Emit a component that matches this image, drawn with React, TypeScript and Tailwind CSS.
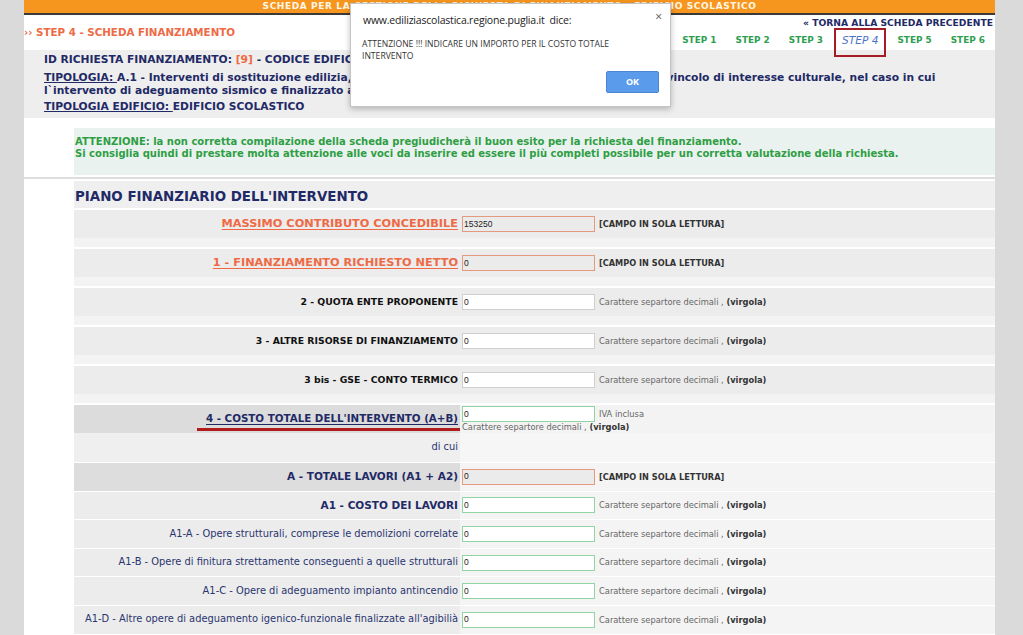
import React from 'react';

type Row = {
  label: string;
  kind: 'ro' | 'plain' | 'green';
  style: 'orange' | 'black' | 'navyBold' | 'navy';
  dark?: boolean;
};

const topRows: Row[] = [
  { label: 'MASSIMO CONTRIBUTO CONCEDIBILE', kind: 'ro', style: 'orange' },
  { label: '1 - FINANZIAMENTO RICHIESTO NETTO', kind: 'ro', style: 'orange' },
  { label: '2 - QUOTA ENTE PROPONENTE', kind: 'plain', style: 'black' },
  { label: '3 - ALTRE RISORSE DI FINANZIAMENTO', kind: 'plain', style: 'black' },
  { label: '3 bis - GSE - CONTO TERMICO', kind: 'plain', style: 'black' },
];

const lavoriRows: Row[] = [
  { label: 'A - TOTALE LAVORI (A1 + A2)', kind: 'ro', style: 'navyBold', dark: true },
  { label: 'A1 - COSTO DEI LAVORI', kind: 'green', style: 'navyBold' },
  { label: 'A1-A - Opere strutturali, comprese le demolizioni correlate', kind: 'green', style: 'navy' },
  { label: 'A1-B - Opere di finitura strettamente conseguenti a quelle strutturali', kind: 'green', style: 'navy' },
  { label: 'A1-C - Opere di adeguamento impianto antincendio', kind: 'green', style: 'navy' },
  { label: "A1-D - Altre opere di adeguamento igenico-funzionale finalizzate all'agibilià", kind: 'green', style: 'navy' },
  { label: 'A1-E - Opere di efficientamento energetico', kind: 'green', style: 'navy' },
];

const labelClass: Record<Row['style'], string> = {
  orange: 'text-[11.3px] font-bold text-[#ee6a45] underline underline-offset-2',
  black: 'text-[9.3px] font-bold text-[#111]',
  navyBold: 'text-[10.5px] font-bold text-[#1f2a66]',
  navy: 'text-[9.9px] text-[#2a3570]',
};

function Field({ kind, value }: { kind: Row['kind']; value: string }) {
  const cls =
    kind === 'ro'
      ? 'bg-[#ebebeb] border-[#e59a80]'
      : kind === 'green'
        ? 'bg-white border-[#8fd6a4]'
        : 'bg-white border-[#cfcfcf]';
  return (
    <div className={`w-[133px] h-[16px] shrink-0 border ${cls} flex items-center px-[1px] text-[8.5px] text-[#222] font-['Liberation_Sans',sans-serif]`}>
      {value}
    </div>
  );
}

function Hint({ kind }: { kind: Row['kind'] }) {
  if (kind === 'ro') {
    return <span className="text-[8.2px] font-bold text-[#333]">[CAMPO IN SOLA LETTURA]</span>;
  }
  return (
    <span className="text-[8.3px] text-[#666]">
      Carattere separtore decimali , <b className="text-[#333]">(virgola)</b>
    </span>
  );
}

function BigRow({ row, value }: { row: Row; value: string }) {
  return (
    <div className="border-t-2 border-white">
      <div className="flex h-[28px] bg-[#ececec]">
        <div className="w-[386px] flex items-center justify-end pr-[2px]">
          <span className={labelClass[row.style]}>{row.label}</span>
        </div>
        <div className="flex-1 flex items-center gap-[4px] pl-[2px]">
          <Field kind={row.kind} value={value} />
          <Hint kind={row.kind} />
        </div>
      </div>
      <div className="h-[9px] bg-[#f3f3f3]" />
    </div>
  );
}

function SmallRow({ row }: { row: Row }) {
  return (
    <div className="flex h-[28.6px] border-t border-white">
      <div className={`w-[386px] flex items-center justify-end pr-[2px] ${row.dark ? 'bg-[#dddddd]' : 'bg-[#ececec]'}`}>
        <span className={`${labelClass[row.style]} whitespace-nowrap`}>{row.label}</span>
      </div>
      <div className="flex-1 flex items-center gap-[4px] pl-[2px] bg-[#f4f4f4]">
        <Field kind={row.kind} value="0" />
        <Hint kind={row.kind} />
      </div>
    </div>
  );
}

export default function App() {
  const steps = ['STEP 1', 'STEP 2', 'STEP 3', 'STEP 4', 'STEP 5', 'STEP 6'];
  return (
    <div className="relative flex w-[1023px] h-[635px] overflow-hidden bg-[#dadada] font-['DejaVu_Sans',Verdana,sans-serif]">
      <div className="w-[24px] shrink-0" />
      <div className="w-[971px] shrink-0 bg-white">
        {/* Title bar */}
        <div className="h-[13px] bg-[#f7961e] flex items-center justify-center text-[9px] font-bold text-[#fff6e6] tracking-[0.6px] whitespace-nowrap">
          SCHEDA PER LA GESTIONE DELLA RICHIESTA DI FINANZIAMENTO - EDIFICIO SCOLASTICO
        </div>
        <div className="h-[2px] bg-[#3a3a3a]" />

        {/* Header */}
        <div className="h-[35px] flex justify-between">
          <div className="pt-[11px] leading-[12px] text-[10.3px] font-bold text-[#ee6a45]">›› STEP 4 - SCHEDA FINANZIAMENTO</div>
          <div className="flex flex-col items-end">
            <div className="pt-[2px] pr-[2px] leading-[11px] text-[9.2px] font-bold text-[#1f2a66]">« TORNA ALLA SCHEDA PRECEDENTE</div>
            <div className="flex items-center gap-[19px] pr-[10px] mt-[7px] leading-[11px] text-[8.9px] font-bold text-[#2e9e50]">
              {steps.map((s) =>
                s === 'STEP 4' ? (
                  <span key={s} className="relative z-10 text-[#4a72c8] italic font-normal text-[10.6px] leading-[11px] border-2 border-[#a51d24] px-[6px] pt-[5px] pb-[9px] -mt-[7px] -mb-[11px] -mx-[8px]">
                    {s}
                  </span>
                ) : (
                  <span key={s}>{s}</span>
                ),
              )}
            </div>
          </div>
        </div>

        {/* Info */}
        <div className="h-[68px] bg-[#eeeeee] pl-[20px] pt-[3px] text-[10.7px] font-bold text-[#1f2a66] whitespace-nowrap">
          <div className="h-[14px] leading-[14px]">
            ID RICHIESTA FINANZIAMENTO: <span className="text-[#ee6a45]">[9]</span> - CODICE EDIFICIO: 0720060001
          </div>
          <div className="mt-[4px] leading-[13px]">
            <span className="underline">TIPOLOGIA: </span>A.1 - Interventi di sostituzione edilizia, con la demolizione e ricostruzione di edifici privi di vincolo di interesse culturale, nel caso in cui
            <br />
            l`intervento di adeguamento sismico e finalizzato ad ottenere la sicurezza
          </div>
          <div className="mt-[3px] h-[14px] leading-[14px]">
            <span className="underline">TIPOLOGIA EDIFICIO: </span>EDIFICIO SCOLASTICO
          </div>
        </div>

        <div className="h-[10px]" />

        {/* Attention */}
        <div className="ml-[50px] h-[47px] bg-[#eaf2ef] pl-[1px] pt-[8px] text-[10px] font-bold text-[#2e9e44] leading-[12px] whitespace-nowrap">
          <div>ATTENZIONE: la non corretta compilazione della scheda pregiudicherà il buon esito per la richiesta del finanziamento.</div>
          <div>Si consiglia quindi di prestare molta attenzione alle voci da inserire ed essere il più completi possibile per un corretta valutazione della richiesta.</div>
        </div>

        <div className="h-[2px]" />
        <div className="h-[2px] bg-[#dedede]" />
        <div className="h-[2px]" />

        {/* Piano finanziario */}
        <div className="ml-[50px]">
          <div className="h-[27px] bg-[#efefef] flex items-end pl-[1px] pb-[1px] text-[13.4px] font-bold text-[#1f2a66]">
            PIANO FINANZIARIO DELL'INTERVENTO
          </div>
          {topRows.map((r, i) => (
            <BigRow key={r.label} row={r} value={i === 0 ? '153250' : '0'} />
          ))}

          {/* Costo totale */}
          <div className="flex h-[30px] border-t-2 border-white">
            <div className="w-[386px] relative flex items-center justify-end pr-[2px] bg-[#dcdcdc]">
              <span className="text-[10.3px] font-bold text-[#1f2a66] underline underline-offset-2">4 - COSTO TOTALE DELL'INTERVENTO (A+B)</span>
              <div className="absolute right-0 bottom-[2px] w-[263px] h-[3px] bg-[#b01c1c]" />
            </div>
            <div className="flex-1 pl-[2px] pt-[1px] bg-[#f3f3f3]">
              <div className="flex items-center gap-[4px]">
                <Field kind="green" value="0" />
                <span className="text-[8.3px] text-[#666]">IVA inclusa</span>
              </div>
              <div className="text-[8.3px] text-[#666] leading-[10px]">
                Carattere separtore decimali , <b className="text-[#333]">(virgola)</b>
              </div>
            </div>
          </div>

          {/* di cui */}
          <div className="flex h-[29px]">
            <div className="w-[386px] flex items-center justify-end pr-[2px] bg-[#efefef] text-[9.9px] text-[#2a3570]">di cui</div>
            <div className="flex-1 bg-[#f6f6f6]" />
          </div>

          {lavoriRows.map((r) => (
            <SmallRow key={r.label} row={r} />
          ))}
        </div>
      </div>
      <div className="flex-1" />

      {/* Browser alert dialog */}
      <div className="absolute left-[350px] top-[3px] w-[321px] h-[104px] bg-white border border-[#c4c4c4] shadow-[0_2px_6px_rgba(0,0,0,0.25)] font-['Open_Sans','Noto_Sans',sans-serif]">
        <div className="flex justify-between pl-[12px] pr-[8px] pt-[9px]">
          <span className="text-[10.5px] leading-[14px] text-[#222] tracking-[-0.2px]">www.ediliziascolastica.regione.puglia.it&nbsp; dice:</span>
          <span className="text-[12px] leading-[10px] text-[#555] -mt-[1px]">×</span>
        </div>
        <div className="pl-[11px] pt-[11px] text-[8.6px] leading-[12px] text-[#333] whitespace-nowrap">
          ATTENZIONE !!! INDICARE UN IMPORTO PER IL COSTO TOTALE
          <br />
          INTERVENTO
        </div>
        <div className="flex justify-end pr-[11px] pt-[9px]">
          <div className="w-[53px] h-[22px] bg-[#5b9bec] border border-[#4a86d4] rounded-[2px] flex items-center justify-center text-[9px] font-bold text-white">
            OK
          </div>
        </div>
      </div>
    </div>
  );
}
